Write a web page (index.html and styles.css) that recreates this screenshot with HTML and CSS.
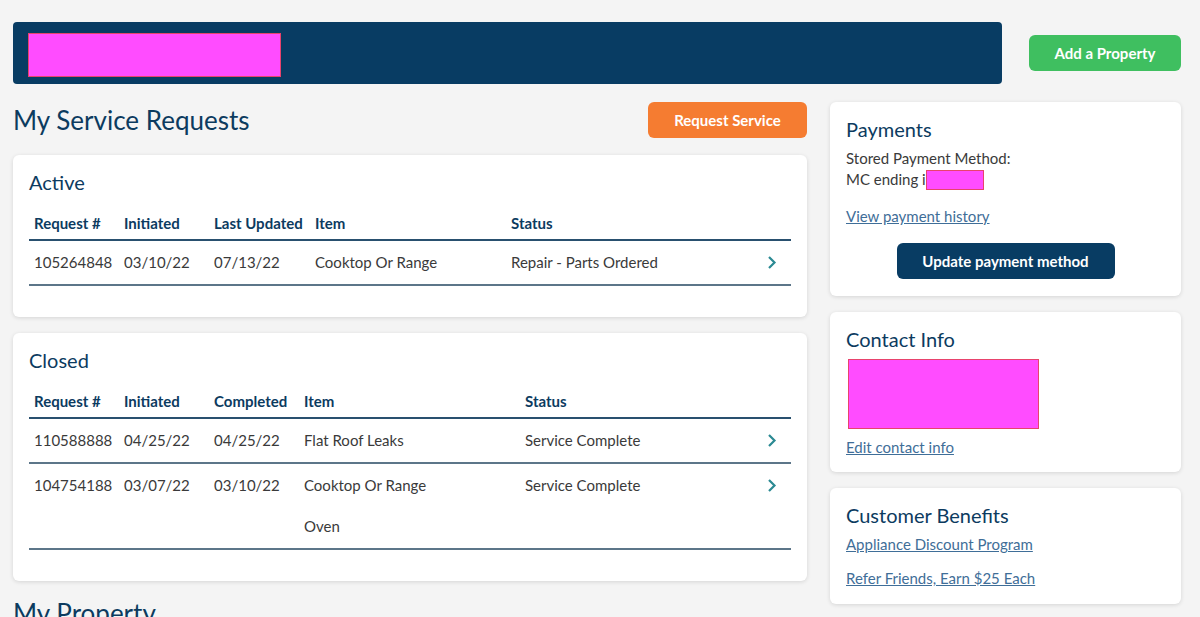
FILE: index.html
```html
<!DOCTYPE html>
<html lang="en">
  <head>
    <meta charset="UTF-8" />
    <meta name="viewport" content="width=device-width, initial-scale=1.0" />
    <title>My Account</title>
    <link rel="stylesheet" href="styles.css">
  </head>
  <body>
    <div class="page">
      <div class="top-row">
        <div class="banner">
          <div class="redacted banner-name"></div>
        </div>
        <button class="btn btn-green">Add a Property</button>
      </div>

      <div class="main">
        <div class="left-col">
          <div class="title-row">
            <h1 class="page-title">My Service Requests</h1>
            <button class="btn btn-orange">Request Service</button>
          </div>

          <div class="card">
            <h2 class="card-title">Active</h2>
            <table class="req-table">
              <colgroup>
                <col style="width:90px" />
                <col style="width:90px" />
                <col style="width:101px" />
                <col style="width:196px" />
                <col />
                <col style="width:38px" />
              </colgroup>
              <thead>
                <tr>
                  <th>Request #</th>
                  <th>Initiated</th>
                  <th>Last Updated</th>
                  <th>Item</th>
                  <th>Status</th>
                  <th></th>
                </tr>
              </thead>
              <tbody>
                <tr>
                  <td>105264848</td>
                  <td>03/10/22</td>
                  <td>07/13/22</td>
                  <td>Cooktop Or Range</td>
                  <td>Repair - Parts Ordered</td>
                  <td class="go">
                    <svg width="10" height="15" viewBox="0 0 10 15"><path d="M2 2 L7.5 7.5 L2 13" /></svg>
                  </td>
                </tr>
              </tbody>
            </table>
          </div>

          <div class="card">
            <h2 class="card-title">Closed</h2>
            <table class="req-table">
              <colgroup>
                <col style="width:90px" />
                <col style="width:90px" />
                <col style="width:90px" />
                <col style="width:221px" />
                <col />
                <col style="width:38px" />
              </colgroup>
              <thead>
                <tr>
                  <th>Request #</th>
                  <th>Initiated</th>
                  <th>Completed</th>
                  <th>Item</th>
                  <th>Status</th>
                  <th></th>
                </tr>
              </thead>
              <tbody>
                <tr>
                  <td>110588888</td>
                  <td>04/25/22</td>
                  <td>04/25/22</td>
                  <td>Flat Roof Leaks</td>
                  <td>Service Complete</td>
                  <td class="go">
                    <svg width="10" height="15" viewBox="0 0 10 15"><path d="M2 2 L7.5 7.5 L2 13" /></svg>
                  </td>
                </tr>
                <tr>
                  <td>104754188</td>
                  <td>03/07/22</td>
                  <td>03/10/22</td>
                  <td>
                    <div>Cooktop Or Range</div>
                    <div class="item-next">Oven</div>
                  </td>
                  <td>Service Complete</td>
                  <td class="go">
                    <svg width="10" height="15" viewBox="0 0 10 15"><path d="M2 2 L7.5 7.5 L2 13" /></svg>
                  </td>
                </tr>
              </tbody>
            </table>
          </div>

          <h1 class="page-title property-title">My Property</h1>
        </div>

        <div class="right-col">
          <div class="card side-card">
            <h2 class="card-title">Payments</h2>
            <p class="text">Stored Payment Method:<br />MC ending i<span class="redacted card-digits"></span></p>
            <a href="#" class="link history-link">View payment history</a>
            <div class="center">
              <button class="btn btn-navy">Update payment method</button>
            </div>
          </div>

          <div class="card side-card contact-card">
            <h2 class="card-title">Contact Info</h2>
            <div class="redacted contact-box"></div>
            <a href="#" class="link">Edit contact info</a>
          </div>

          <div class="card side-card benefits-card">
            <h2 class="card-title">Customer Benefits</h2>
            <a href="#" class="link first-link">Appliance Discount Program</a>
            <a href="#" class="link benefit-link">Refer Friends, Earn $25 Each</a>
          </div>
        </div>
      </div>
    </div>
  </body>
</html>
```

FILE: styles.css
```css
body {
  margin: 0;
  background-color: #f4f4f4;
  font-family: Lato, "Open Sans", Arial, sans-serif;
  color: #3a3a3a;
  overflow: hidden;
}
.page {
  padding: 22px 19px 0 13px;
}
.top-row {
  display: flex;
  align-items: center;
}
.banner {
  flex: 1;
  height: 62px;
  box-sizing: border-box;
  background-color: #083c63;
  border-radius: 4px;
  margin-right: 27px;
  padding: 11px 0 0 15px;
}
.redacted {
  background-color: #ff4cff;
  border: 1px solid #e8436c;
  box-sizing: border-box;
}
.banner-name {
  width: 253px;
  height: 44px;
}
.btn {
  outline: none;
  border: none;
  border-radius: 6px;
  color: white;
  font-family: inherit;
  font-weight: 700;
  font-size: 15px;
  height: 36px;
  cursor: pointer;
}
.btn-green {
  background-color: #3fbf60;
  width: 152px;
}
.btn-orange {
  background-color: #f57c31;
  width: 159px;
}
.btn-navy {
  background-color: #083c63;
  width: 218px;
}

.main {
  display: flex;
  gap: 23px;
  margin-top: 18px;
}
.left-col {
  width: 794px;
}
.right-col {
  width: 351px;
  display: flex;
  flex-direction: column;
  gap: 16px;
}
.title-row {
  display: flex;
  justify-content: space-between;
  align-items: center;
  margin-bottom: 17px;
}
.page-title {
  margin: 0;
  font-size: 26px;
  font-weight: 400;
  color: #0c3b5f;
}
.property-title {
  margin-top: 16px;
}

/* --- cards --- */
.card {
  background-color: white;
  border-radius: 6px;
  box-shadow: 0 1px 4px rgba(0, 0, 0, 0.13);
  padding: 16px 16px 31px;
  margin-bottom: 16px;
}
.card-title {
  margin: 0;
  font-size: 20px;
  line-height: 22px;
  font-weight: 400;
  color: #0c3b5f;
}
.req-table {
  width: 100%;
  border-collapse: collapse;
  table-layout: fixed;
  margin-top: 14px;
  font-size: 15px;
}
.req-table th {
  text-align: left;
  color: #0c3b5f;
  font-weight: 700;
  line-height: 20px;
  padding: 6px 5px;
  border-bottom: 2px solid #29506f;
  white-space: nowrap;
}
.req-table td {
  line-height: 20px;
  padding: 11px 5px 12px;
  vertical-align: top;
  border-bottom: 2px solid #5c7689;
  white-space: nowrap;
}
.item-next {
  margin-top: 21px;
}
.go svg {
  display: block;
  margin: 3px auto 0;
  fill: none;
  stroke: #2b8a93;
  stroke-width: 2.2;
}

/* --- right column --- */
.side-card {
  margin-bottom: 0;
  padding-bottom: 17px;
}
.text {
  margin: 8px 0 0;
  font-size: 15px;
  line-height: 21px;
}
.card-digits {
  display: inline-block;
  width: 58px;
  height: 20px;
  vertical-align: -5px;
}
.link {
  display: block;
  color: #3f6e98;
  font-size: 15px;
  line-height: 20px;
  text-decoration: underline;
}
.history-link {
  margin-top: 16px;
}
.center {
  text-align: center;
  margin-top: 17px;
}
.contact-card {
  padding-bottom: 15px;
}
.contact-box {
  width: 191px;
  height: 70px;
  margin: 9px 0 8px 2px;
}
.benefits-card {
  padding-bottom: 16px;
}
.first-link {
  margin-top: 8px;
}
.benefit-link {
  margin-top: 14px;
}
```
